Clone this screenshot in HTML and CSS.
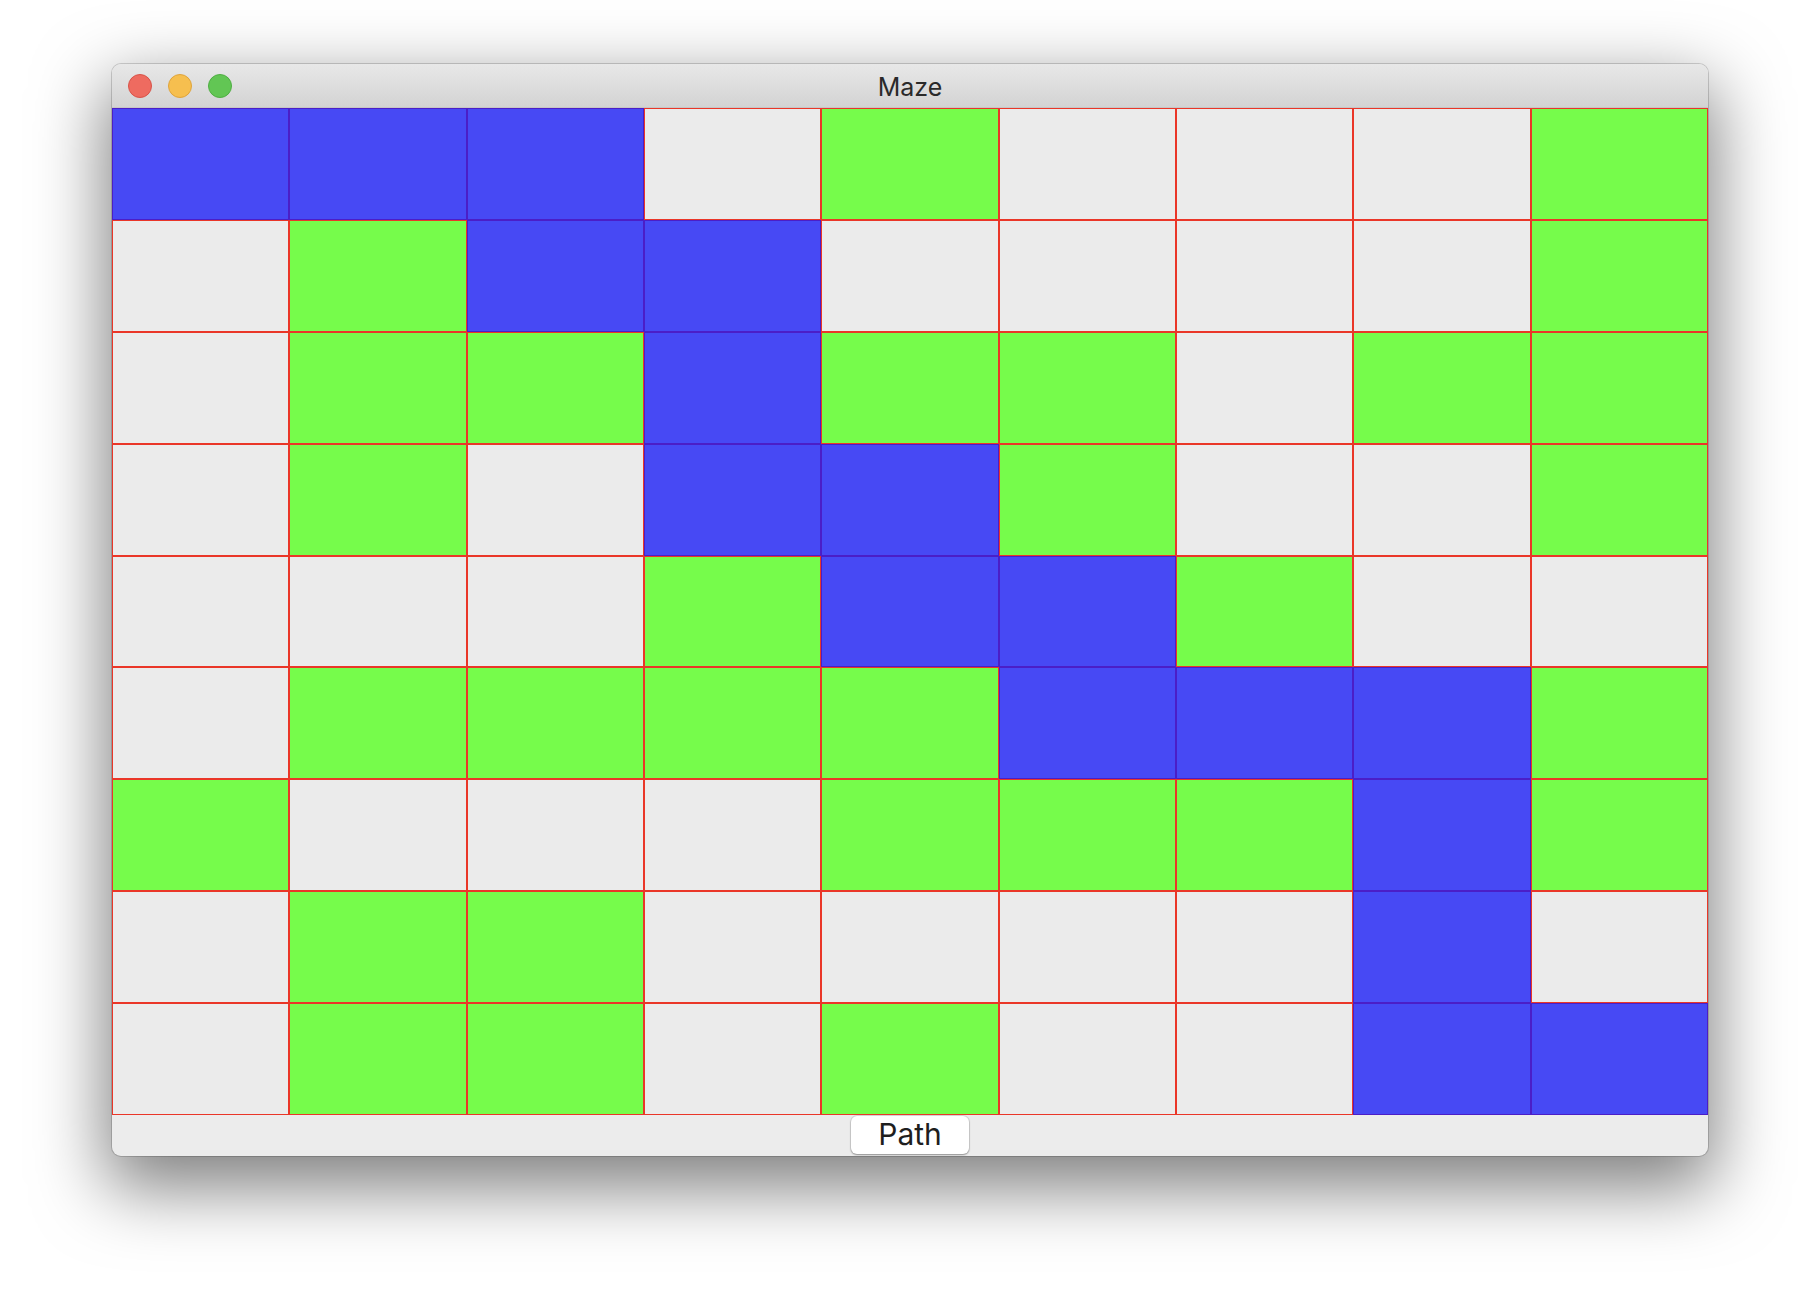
FILE: index.html
```html
<!DOCTYPE html>
<html>
<head>
    <meta content="text/html; charset=utf-8" http-equiv="Content-Type">
    <link rel="stylesheet" href="styles.css">
    <title>Maze</title>
</head>
<body>
    <div class="window">
        <div class="titlebar">
            <div class="lights">
                <span class="light close"></span>
                <span class="light min"></span>
                <span class="light max"></span>
            </div>
            <div class="title">Maze</div>
        </div>
        <div class="maze">
            <div class="cell path"></div><div class="cell path"></div><div class="cell path"></div><div class="cell"></div><div class="cell wall"></div><div class="cell"></div><div class="cell"></div><div class="cell"></div><div class="cell wall"></div>
            <div class="cell"></div><div class="cell wall"></div><div class="cell path"></div><div class="cell path"></div><div class="cell"></div><div class="cell"></div><div class="cell"></div><div class="cell"></div><div class="cell wall"></div>
            <div class="cell"></div><div class="cell wall"></div><div class="cell wall"></div><div class="cell path"></div><div class="cell wall"></div><div class="cell wall"></div><div class="cell"></div><div class="cell wall"></div><div class="cell wall"></div>
            <div class="cell"></div><div class="cell wall"></div><div class="cell"></div><div class="cell path"></div><div class="cell path"></div><div class="cell wall"></div><div class="cell"></div><div class="cell"></div><div class="cell wall"></div>
            <div class="cell"></div><div class="cell"></div><div class="cell"></div><div class="cell wall"></div><div class="cell path"></div><div class="cell path"></div><div class="cell wall"></div><div class="cell"></div><div class="cell"></div>
            <div class="cell"></div><div class="cell wall"></div><div class="cell wall"></div><div class="cell wall"></div><div class="cell wall"></div><div class="cell path"></div><div class="cell path"></div><div class="cell path"></div><div class="cell wall"></div>
            <div class="cell wall"></div><div class="cell"></div><div class="cell"></div><div class="cell"></div><div class="cell wall"></div><div class="cell wall"></div><div class="cell wall"></div><div class="cell path"></div><div class="cell wall"></div>
            <div class="cell"></div><div class="cell wall"></div><div class="cell wall"></div><div class="cell"></div><div class="cell"></div><div class="cell"></div><div class="cell"></div><div class="cell path"></div><div class="cell"></div>
            <div class="cell"></div><div class="cell wall"></div><div class="cell wall"></div><div class="cell"></div><div class="cell wall"></div><div class="cell"></div><div class="cell"></div><div class="cell path"></div><div class="cell path"></div>
        </div>
        <div class="bottombar">
            <button class="btn">Path</button>
        </div>
    </div>
</body>
</html>
```

FILE: styles.css
```css
body, html {
    margin: 0;
    padding: 0;
    background: #ffffff;
}

body {
    box-sizing: border-box;
    min-height: 1316px;
    padding: 64px 0 0 112px;
    font-family: Inter, "Noto Sans", sans-serif;
}

.window {
    width: 1596px;
    border-radius: 9px;
    overflow: hidden;
    background: #ececec;
    box-shadow: 0 0 0 1px rgba(0, 0, 0, 0.16), 0 26px 70px 6px rgba(0, 0, 0, 0.5);
}

.titlebar {
    height: 43px;
    border-bottom: 1px solid #c6c6c6;
    background: linear-gradient(#e8e8e8, #d3d3d3);
    display: flex;
    align-items: center;
    justify-content: center;
    position: relative;
}

.lights {
    position: absolute;
    left: 16px;
    top: 10px;
    display: flex;
    gap: 16px;
}

.light {
    width: 22px;
    height: 22px;
    border-radius: 50%;
    border: 1px solid;
}

.close { background: #ee6b60; border-color: #d85349; }
.min { background: #f6bf4f; border-color: #dfa43c; }
.max { background: #62c654; border-color: #4fae43; }

.title {
    font-size: 25px;
    color: #2a2a2a;
    margin-top: 2px;
}

.maze {
    display: grid;
    grid-template-columns: repeat(9, 1fr);
    grid-template-rows: repeat(9, 111.9px);
}

.cell {
    box-sizing: border-box;
    border: 1px solid #ea3628;
    background: #ebebeb;
}

.cell.wall {
    background: #76fc4b;
}

.cell.path {
    background: #4749f4;
    border-color: #4b1ec7;
}

.bottombar {
    height: 41px;
    display: flex;
    justify-content: center;
    align-items: flex-start;
}

.btn {
    margin-top: 1px;
    width: 118px;
    height: 38px;
    border: none;
    border-radius: 6px;
    background: #ffffff;
    box-shadow: 0 0 0 1px rgba(0, 0, 0, 0.08), 0 1px 2px rgba(0, 0, 0, 0.35);
    font-family: Inter, "Noto Sans", sans-serif;
    font-size: 30px;
    color: #1e1e1e;
    padding: 0 0 3px;
    line-height: 34px;
}
```
